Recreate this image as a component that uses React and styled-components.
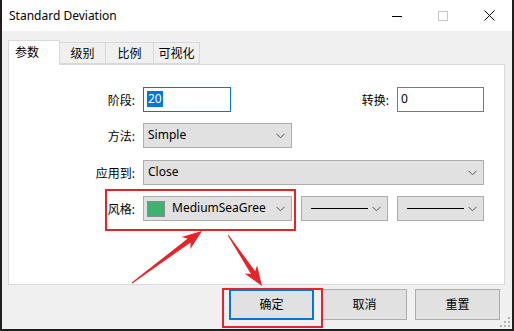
import React from 'react';
import styled, { createGlobalStyle } from 'styled-components';

const GlobalStyle = createGlobalStyle`
  html, body {
    margin: 0;
    padding: 0;
    background: #1f1f1f;
  }
  * {
    box-sizing: border-box;
  }
`;

const FONT = `"Noto Sans", "Noto Sans CJK SC", sans-serif`;

const Screen = styled.div`
  position: relative;
  width: 514px;
  height: 331px;
  padding: 0 2px 2px 2px;
  background: #1f1f1f;
  font-family: ${FONT};
  font-size: 12px;
  color: #000;
  overflow: hidden;
`;

const Window = styled.div`
  width: 510px;
  height: 329px;
  background: #f0f0f0;
  display: flex;
  flex-direction: column;
`;

const TitleBar = styled.div`
  height: 31px;
  background: #fff;
  display: flex;
  align-items: center;
  padding-left: 7px;
`;

const Title = styled.div`
  flex: 1;
  font-size: 12px;
  padding-bottom: 1px;
`;

const CaptionButton = styled.div`
  width: 46px;
  height: 31px;
  display: flex;
  align-items: center;
  justify-content: center;
`;

const Body = styled.div`
  flex: 1;
  display: flex;
  flex-direction: column;
  padding: 9px 7px 0 6px;
  position: relative;
`;

const Tabs = styled.div`
  display: flex;
  align-items: flex-end;
  height: 24px;
  position: relative;
  z-index: 1;
`;

const Tab = styled.div`
  width: ${(p) => p.w}px;
  height: ${(p) => (p.active ? 25 : 22)}px;
  margin-bottom: ${(p) => (p.active ? -1 : 0)}px;
  margin-left: ${(p) => (p.first ? 0 : -1)}px;
  background: ${(p) => (p.active ? '#fff' : '#f0f0f0')};
  border: 1px solid #d9d9d9;
  border-bottom: ${(p) => (p.active ? 'none' : '1px solid #d9d9d9')};
  display: flex;
  align-items: center;
  justify-content: ${(p) => (p.active ? 'flex-start' : 'center')};
  padding-left: ${(p) => (p.active ? 6 : 0)}px;
  padding-bottom: ${(p) => (p.active ? 3 : 1)}px;
  font-size: 12px;
`;

const Panel = styled.div`
  height: 221px;
  background: #fff;
  border: 1px solid #d9d9d9;
  display: flex;
  flex-direction: column;
  gap: 11px;
  padding: 22px 20px 0 0;
`;

const Row = styled.div`
  display: flex;
  align-items: center;
  height: 25px;
  margin-top: ${(p) => p.extra || 0}px;
`;

const Label = styled.div`
  width: ${(p) => p.w || 126}px;
  margin-left: ${(p) => p.ml || 0}px;
  margin-right: 8px;
  text-align: right;
  white-space: nowrap;
`;

const Spacer = styled.div`
  flex: 1;
`;

const TextInput = styled.div`
  width: ${(p) => p.w}px;
  height: 25px;
  border: 1px solid ${(p) => (p.focused ? '#0078d7' : '#7a7a7a')};
  background: #fff;
  display: flex;
  align-items: center;
  padding-left: 3px;
  padding-bottom: 2px;
`;

const Selected = styled.span`
  background: #0078d7;
  color: #fff;
  padding: 0 1px;
  line-height: 16px;
`;

const Select = styled.div`
  width: ${(p) => p.w}px;
  height: 25px;
  margin-left: ${(p) => p.ml || 0}px;
  border: 1px solid #adadad;
  background: #e1e1e1;
  display: flex;
  align-items: center;
  padding: 0 4px 0 ${(p) => p.pl ?? 4}px;
`;

const Value = styled.div`
  flex: ${(p) => (p.w ? 'none' : 1)};
  width: ${(p) => (p.w ? `${p.w}px` : 'auto')};
  overflow: hidden;
  white-space: nowrap;
  padding-bottom: 2px;
`;

const Swatch = styled.div`
  width: 18px;
  height: 16px;
  background: #3cb371;
  border: 1px solid #8a8a8a;
  margin-right: 7px;
  flex: none;
`;

const LineSample = styled.div`
  width: 57px;
  height: 1px;
  margin-left: 3px;
  background: #000;
`;

const ChevronWrap = styled.div`
  margin-left: auto;
  width: 14px;
  display: flex;
  justify-content: center;
`;

const Footer = styled.div`
  display: flex;
  justify-content: flex-end;
  gap: 8px;
  padding: 4px 5px 0 0;
`;

const Button = styled.div`
  width: 85px;
  height: 31px;
  background: #e1e1e1;
  border: ${(p) => (p.primary ? '2px solid #0078d7' : '1px solid #adadad')};
  display: flex;
  align-items: center;
  justify-content: center;
  padding-bottom: 2px;
  font-size: 12px;
`;

const Grip = styled.svg`
  position: absolute;
  right: 0;
  bottom: 0;
`;

const Marker = styled.div`
  position: absolute;
  left: ${(p) => p.x}px;
  top: ${(p) => p.y}px;
  width: ${(p) => p.w}px;
  height: ${(p) => p.h}px;
  border: 2px solid #e5232a;
  pointer-events: none;
`;

const Overlay = styled.svg`
  position: absolute;
  left: 0;
  top: 0;
  pointer-events: none;
`;

function Chevron() {
  return (
    <ChevronWrap>
      <svg width="9" height="6" viewBox="0 0 9 6">
        <polyline points="0.5,0.8 4.5,4.8 8.5,0.8" fill="none" stroke="#555" strokeWidth="1" />
      </svg>
    </ChevronWrap>
  );
}

function arrowPoints(x1, y1, x2, y2, head, headW, neckW, tailW) {
  const dx = x2 - x1;
  const dy = y2 - y1;
  const len = Math.hypot(dx, dy);
  const ux = dx / len;
  const uy = dy / len;
  const nx = -uy;
  const ny = ux;
  const bx = x2 - ux * head;
  const by = y2 - uy * head;
  const nbx = x2 - ux * head * 0.8;
  const nby = y2 - uy * head * 0.8;
  const pts = [
    [x1 + (nx * tailW) / 2, y1 + (ny * tailW) / 2],
    [nbx + (nx * neckW) / 2, nby + (ny * neckW) / 2],
    [bx + (nx * headW) / 2, by + (ny * headW) / 2],
    [x2, y2],
    [bx - (nx * headW) / 2, by - (ny * headW) / 2],
    [nbx - (nx * neckW) / 2, nby - (ny * neckW) / 2],
    [x1 - (nx * tailW) / 2, y1 - (ny * tailW) / 2],
  ];
  return pts.map((p) => p.map((v) => v.toFixed(1)).join(',')).join(' ');
}

const arrows = [
  arrowPoints(132, 283, 202, 231, 20, 15, 5, 1),
  arrowPoints(228, 235, 262, 286, 20, 15, 5, 1),
];

export default function App() {
  return (
    <>
      <GlobalStyle />
      <Screen>
        <Window>
          <TitleBar>
            <Title>Standard Deviation</Title>
            <CaptionButton>
              <svg width="10" height="10" viewBox="0 0 10 10">
                <line x1="0" y1="5.5" x2="10" y2="5.5" stroke="#000" strokeWidth="1" />
              </svg>
            </CaptionButton>
            <CaptionButton>
              <svg width="10" height="10" viewBox="0 0 10 10">
                <rect x="0.5" y="0.5" width="9" height="9" fill="none" stroke="#c6c6c6" strokeWidth="1" />
              </svg>
            </CaptionButton>
            <CaptionButton>
              <svg width="11" height="11" viewBox="0 0 11 11">
                <path d="M0.5 0.5 L10.5 10.5 M10.5 0.5 L0.5 10.5" stroke="#000" strokeWidth="1" />
              </svg>
            </CaptionButton>
          </TitleBar>

          <Body>
            <Tabs>
              <Tab active first w={52}>参数</Tab>
              <Tab w={47}>级别</Tab>
              <Tab w={49}>比例</Tab>
              <Tab w={47}>可视化</Tab>
            </Tabs>

            <Panel>
              <Row>
                <Label>阶段:</Label>
                <TextInput w={88} focused>
                  <Selected>20</Selected>
                </TextInput>
                <Spacer />
                <Label w={40}>转换:</Label>
                <TextInput w={87}>0</TextInput>
              </Row>
              <Row>
                <Label>方法:</Label>
                <Select w={149}>
                  <Value>Simple</Value>
                  <Chevron />
                </Select>
              </Row>
              <Row extra={1}>
                <Label>应用到:</Label>
                <Select w={341}>
                  <Value>Close</Value>
                  <Chevron />
                </Select>
              </Row>
              <Row>
                <Label>风格:</Label>
                <Select w={149} pl={3}>
                  <Swatch />
                  <Value w={94}>MediumSeaGreen</Value>
                  <Chevron />
                </Select>
                <Select w={87} ml={9} pl={6}>
                  <LineSample />
                  <Chevron />
                </Select>
                <Select w={87} ml={9} pl={6}>
                  <LineSample />
                  <Chevron />
                </Select>
              </Row>
            </Panel>

            <Footer>
              <Button primary>确定</Button>
              <Button>取消</Button>
              <Button>重置</Button>
            </Footer>

            <Grip width="12" height="12" viewBox="0 0 12 12">
              {[
                [8, 0], [8, 4], [4, 4], [8, 8], [4, 8], [0, 8],
              ].map(([x, y]) => (
                <rect key={`${x}-${y}`} x={x} y={y} width="2" height="2" fill="#b4b4b4" />
              ))}
            </Grip>
          </Body>
        </Window>

        <Marker x={105} y={189} w={191} h={42} />
        <Marker x={222} y={288} w={101} h={40} />

        <Overlay width="514" height="331" viewBox="0 0 514 331">
          {arrows.map((pts, i) => (
            <polygon key={i} points={pts} fill="#e5232a" />
          ))}
        </Overlay>
      </Screen>
    </>
  );
}
